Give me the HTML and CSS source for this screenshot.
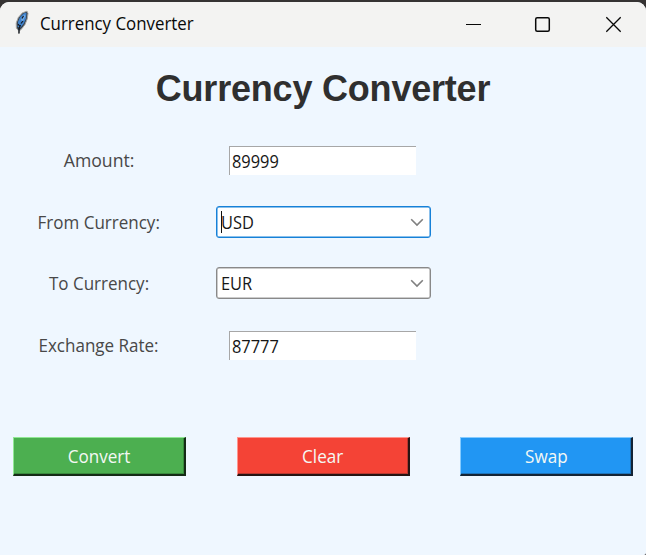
FILE: index.html
```html
<!DOCTYPE html>
<html lang="en">
<head>
<meta charset="utf-8">
<title>Currency Converter</title>
<link rel="stylesheet" href="styles.css">
</head>
<body>
<div class="window">
  <header class="titlebar">
    <svg class="feather" width="16" height="26" viewBox="0 0 16 26">
      <path d="M4.8 23.5 4.4 20.5 2.4 18 2.2 13 4.3 7.5 8.5 2.8 13 1.2 14 3.5 13.2 9 11 14.5 8 18.5 5.8 20.5Z" fill="#39434e" stroke="#a5a5a3" stroke-width="1"/>
      <path d="M3.7 17 4 12 6 7 9.5 3.5 12.5 2.5 12 8.5 9.5 14 6.5 17.5Z" fill="#4083cd"/>
      <path d="M7 9 10.5 4.5 11.5 6 8.4 12Z" fill="#72aae5"/>
      <path d="M5 23.5V18.5L6.5 15M4 14l1.5 2M9 11l-2 2.5M9.5 6 8 8.5" fill="none" stroke="#10151d" stroke-width="1.2"/>
    </svg>
    <span class="caption"><span class="fit-caption">Currency Converter</span></span>
    <svg class="controls" width="158" height="18" viewBox="0 0 158 18" fill="none" stroke="#080808" stroke-width="1.3">
      <path d="M1 9.5h15" stroke-width="1"/>
      <rect x="70.7" y="2.7" width="13.6" height="13.6" rx="1.5" stroke-width="1.5"/>
      <path d="m141.3 2.3 14.4 14.4m0-14.4-14.4 14.4"/>
    </svg>
  </header>
  <main class="content">
    <h1 class="heading">Currency Converter</h1>
    <div class="form">
      <span class="label"><span class="fit-amount">Amount:</span></span>
      <div class="entry"><span class="value">89999</span></div>
      <span class="label"><span>From Currency:</span></span>
      <div class="combo focused"><i class="caret"></i><span class="value">USD</span>
        <svg class="chevron" width="14" height="9" viewBox="0 0 14 9"><path d="m1.2 1.2 5.8 5.8 5.8-5.8"/></svg></div>
      <span class="label"><span>To Currency:</span></span>
      <div class="combo"><span class="value">EUR</span>
        <svg class="chevron" width="14" height="9" viewBox="0 0 14 9"><path d="m1.2 1.2 5.8 5.8 5.8-5.8"/></svg></div>
      <span class="label"><span>Exchange Rate:</span></span>
      <div class="entry"><span class="value">87777</span></div>
    </div>
    <div class="actions">
      <button class="button convert"><span>Convert</span></button>
      <button class="button clear"><span>Clear</span></button>
      <button class="button swap"><span>Swap</span></button>
    </div>
  </main>
</div>
</body>
</html>
```
FILE: styles.css
```css
* { box-sizing: border-box; }
body {
  margin: 0;
  height: 555px;
  padding-top: 2px;
  overflow: hidden;
  background: #353333;
  font-family: "Open Sans", "Noto Sans", sans-serif;
}
.window {
  height: 553px;
  border-radius: 9px 9px 2px 0;
  overflow: hidden;
  background: #eff7ff;
}
.titlebar {
  height: 45px;
  display: flex;
  align-items: center;
  padding: 0 24px 0 14px;
  background: #f3f3f2;
}
.feather { margin-top: -4px; }
.caption {
  margin-left: 10px;
  margin-top: -4px;
  font-size: 17.5px;
  line-height: 24px;
  color: #080808;
  white-space: nowrap;
}
.caption span, .label span, .value, .button span { display: inline-block; white-space: nowrap; }
.fit-caption { transform: scaleX(.963); transform-origin: left; }
.controls { margin-left: auto; margin-right: -1px; margin-top: -1px; }
.content { display: flex; flex-direction: column; }
.heading {
  margin: 21px 0 0;
  height: 41px;
  font: bold 36px/42px "Liberation Sans", Arial, sans-serif;
  letter-spacing: -.2px;
  text-align: center;
  color: #2f2f2f;
}
.form {
  display: grid;
  grid-template-columns: 198px 249px 199px;
  grid-template-rows: 60px 64px 58px 66px;
  align-items: center;
  justify-items: center;
  margin-top: 21px;
  font-size: 18px;
  line-height: 24px;
}
.label { grid-column: 1; color: #484848; }
.label span { transform: scaleX(.945); }
.label .fit-amount { transform: scaleX(.98); }
.entry, .combo { grid-column: 2; display: flex; align-items: center; background: #fff; color: #161616; }
.entry {
  width: 187px;
  height: 29px;
  padding-left: 2px;
  border-top: 1.5px solid #a7a7a7;
  border-left: 1.5px solid #a7a7a7;
}
.combo {
  position: relative;
  width: 215px;
  height: 32px;
  margin-left: 1px;
  padding: 0 6px 0 4px;
  border: 1px solid #898989;
  border-radius: 3px;
  box-shadow: inset 0 0 0 .5px #999;
}
.focused { border-color: #1681d8; box-shadow: inset 0 0 0 .5px #1681d8; }
.caret { position: absolute; left: 4px; top: 4px; width: 1.5px; height: 22px; background: #111; }
.value { transform: scaleX(.91); transform-origin: left; }
.chevron { margin-left: auto; fill: none; stroke: #808080; stroke-width: 1.6; }
.actions {
  display: flex;
  justify-content: space-between;
  padding: 0 13px;
  margin-top: 59px;
}
.button {
  width: 173px;
  height: 39px;
  padding: 0;
  border-style: solid;
  border-width: 1px 2px 2px 1px;
  font: 18px/24px "Open Sans", "Noto Sans", sans-serif;
  color: #f4f8f4;
}
.button span { transform: scaleX(.95); }
.convert { background: #4caf50; border-color: #91e895 #142b16 #142b16 #91e895; box-shadow: inset -1px -1px #398b3d; }
.clear { background: #f44336; border-color: #ff968f #251413 #251413 #ff968f; box-shadow: inset -1px -1px #b73830; }
.swap { background: #2196f3; border-color: #85cbff #142435 #142435 #85cbff; box-shadow: inset -1px -1px #1e73b9; }
```
